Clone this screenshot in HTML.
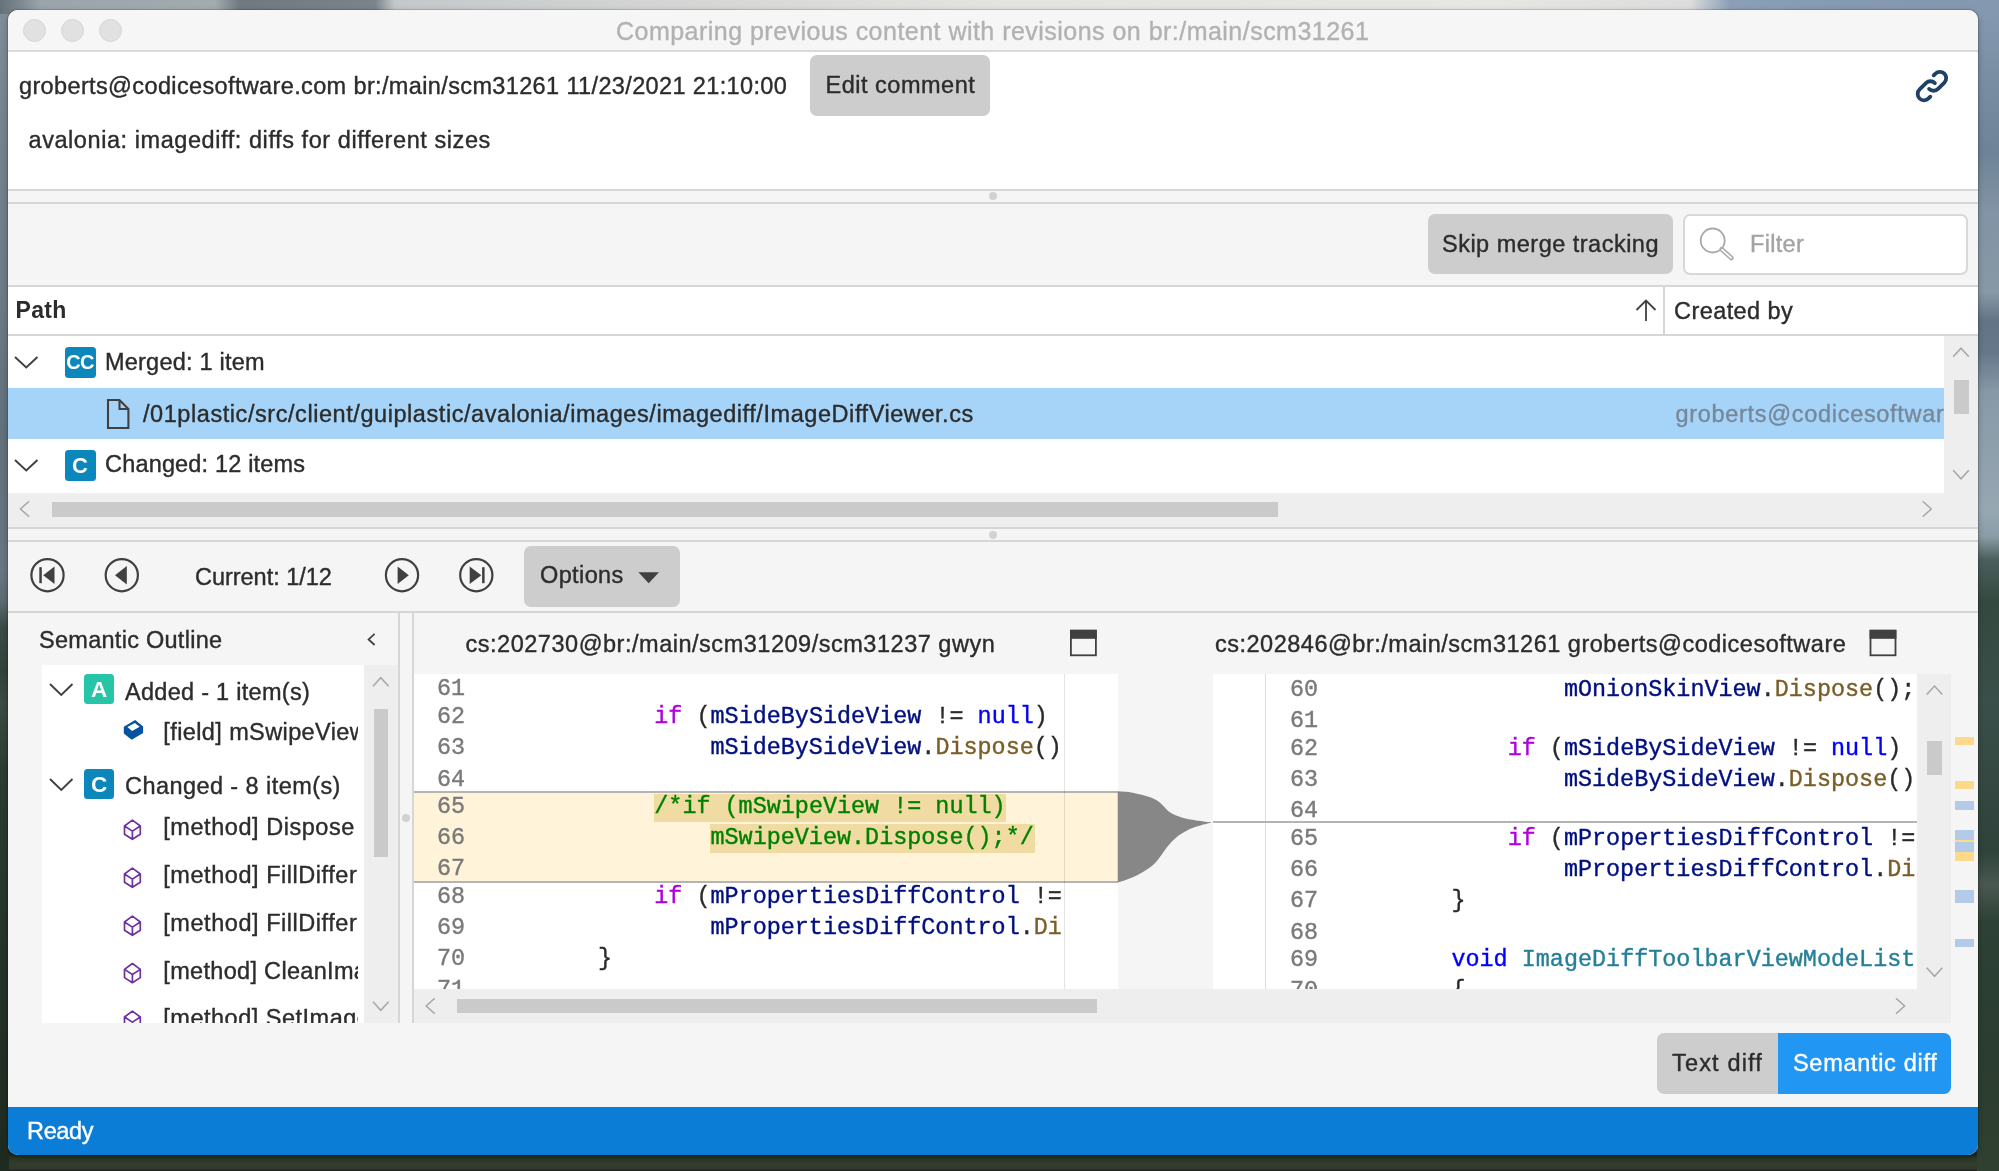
<!DOCTYPE html>
<html><head><meta charset="utf-8">
<title>Comparing previous content with revisions on br:/main/scm31261</title>
<style>
*{box-sizing:border-box;margin:0;padding:0}
html,body{width:1999px;height:1171px;overflow:hidden}
body{position:relative;font-family:"Liberation Sans",sans-serif;color:#323232;
 background:linear-gradient(to bottom,#8c99a3 0px,#7f8d98 250px,#6d7b85 520px,#4a5852 575px,#36443a 640px,#2f3b30 850px,#2a3426 1171px);}
.a{position:absolute}
.t{position:absolute;white-space:pre;line-height:1;-webkit-text-stroke-width:0.38px}
.m{font-family:"Liberation Mono",monospace}
svg{overflow:visible}
#top{position:absolute;left:0;top:0;width:1999px;height:14px;
 background:linear-gradient(to right,#66727a 0px,#7f8a92 22px,#9aa4ab 40px,#a3abb0 215px,#6f797f 240px,#7a848a 375px,#c4c8ca 395px,#d6d7d5 700px,#e3e3e0 1000px,#e6e6e3 1500px,#dcdddc 1690px,#8b9fb8 1730px,#8499b2 1850px,#8498b0 1999px)}
#bot{position:absolute;left:0;top:1150px;width:1999px;height:21px;background:linear-gradient(to bottom,#1f291f 0px,#1f291f 5px,#2b3726 8px,#333e2d 14px,#2f392a 19px,#1a1f18 21px)}
#bgL{position:absolute;left:0;top:12px;width:9px;height:1159px;
 background:linear-gradient(to bottom,#808d97 0px,#75848f 120px,#6b7a85 300px,#62717c 420px,#687781 560px,#5c6b70 590px,#3a4c45 615px,#32443b 660px,#3b4c44 690px,#2c3d33 760px,#26362b 900px,#1f2b21 1140px)}
#bgR{position:absolute;left:1977px;top:12px;width:22px;height:1159px;
 background:linear-gradient(to bottom,#8498b0 0px,#7b8fa4 60px,#6f8397 140px,#8294a5 200px,#8798a6 280px,#627484 310px,#65778a 340px,#8799a7 380px,#97a8b3 500px,#8a9ca5 525px,#4a5f5c 548px,#34493f 590px,#3a4f49 690px,#2f433b 840px,#4a5851 873px,#2d4136 910px,#2b3d30 1040px,#2f4030 1140px)}
#win{position:absolute;left:8px;top:10px;width:1970px;height:1145px;background:#f5f5f5;border-radius:10px;overflow:hidden;}
#sh{position:absolute;left:8px;top:10px;width:1970px;height:1145px;border-radius:10px;box-shadow:0 0 0 1px rgba(0,0,0,.12),0 2px 6px rgba(0,0,0,.28)}
#c{position:absolute;left:-8px;top:-10px;width:1999px;height:1171px;will-change:transform}
.k{color:#af00db}.v{color:#001080}.f{color:#795e26}.b{color:#0000ff}.ty{color:#267f99}.cm{color:#008000}.p{color:#1e1e1e}
.hi{background:#f0dca2}
</style></head><body>
<div id="bot"></div><div id="bgL"></div><div id="bgR"></div><div id="top"></div><div id="sh"></div>
<div id="win"><div id="c">
<div class="a" style="left:8px;top:10px;width:1970px;height:40px;background:#f6f6f6;"></div>
<div class="a" style="left:8px;top:50px;width:1970px;height:1.5px;background:#dadada;"></div>
<div class="a" style="left:22.799999999999997px;top:19px;width:23px;height:23px;background:#e1e1e1;border-radius:50%;border:1px solid #d6d6d6"></div>
<div class="a" style="left:60.8px;top:19px;width:23px;height:23px;background:#e1e1e1;border-radius:50%;border:1px solid #d6d6d6"></div>
<div class="a" style="left:98.8px;top:19px;width:23px;height:23px;background:#e1e1e1;border-radius:50%;border:1px solid #d6d6d6"></div>
<div class="t" id="t0" style="left:616.00px;top:18.94px;font-size:25px;color:#b2b2b2;letter-spacing:0.473px;">Comparing previous content with revisions on br:/main/scm31261</div>
<div class="a" style="left:8px;top:51.5px;width:1970px;height:137.5px;background:#ffffff;"></div>
<div class="t" id="t1" style="left:19.00px;top:75.41px;font-size:23.5px;color:#2c2c2c;letter-spacing:0.364px;">groberts@codicesoftware.com br:/main/scm31261 11/23/2021 21:10:00</div>
<div class="a" style="left:810px;top:55px;width:180px;height:61px;background:#cdcdcd;border-radius:7px"></div>
<div class="t" id="t2" style="left:825.50px;top:74.21px;font-size:23.5px;color:#2c2c2c;letter-spacing:0.512px;">Edit comment</div>
<div class="t" id="t3" style="left:28.50px;top:128.71px;font-size:23.5px;color:#2c2c2c;letter-spacing:0.566px;">avalonia: imagediff: diffs for different sizes</div>
<svg class="a" style="left:1912.8px;top:66.9px;" width="38" height="38" viewBox="0 0 24 24"><path d="M13.828 10.172a4 4 0 00-5.656 0l-4 4a4 4 0 105.656 5.656l1.102-1.101m-.758-4.899a4 4 0 005.656 0l4-4a4 4 0 00-5.656-5.656l-1.1 1.1" fill="none" stroke="#1f4166" stroke-width="2.4" stroke-linecap="round" stroke-linejoin="round"/></svg>
<div class="a" style="left:8px;top:188.6px;width:1970px;height:2px;background:#d6d6d6;"></div>
<div class="a" style="left:8px;top:202px;width:1970px;height:2px;background:#d6d6d6;"></div>
<div class="a" style="left:989.2px;top:192.2px;width:8px;height:8px;background:#d2d2d2;border-radius:50%"></div>
<div class="a" style="left:1427.5px;top:214px;width:245px;height:60px;background:#cdcdcd;border-radius:7px"></div>
<div class="t" id="t4" style="left:1442.00px;top:233.21px;font-size:23.5px;color:#2c2c2c;letter-spacing:0.490px;">Skip merge tracking</div>
<div class="a" style="left:1682.8px;top:213.7px;width:285.4px;height:61.1px;background:#ffffff;border-radius:7px;border:2px solid #d8d8d8"></div>
<svg class="a" style="left:1695.6px;top:224px;" width="40" height="40" viewBox="0 0 40 40"><circle cx="16.7" cy="16.5" r="12" fill="none" stroke="#a9a9a9" stroke-width="1.8"/><path d="M25.6 25.2 L35.4 34" stroke="#a9a9a9" stroke-width="4.6" stroke-linecap="round"/><path d="M26 25.6 L35.2 33.8" stroke="#ffffff" stroke-width="1.6" stroke-linecap="round"/></svg>
<div class="t" id="t5" style="left:1750.00px;top:233.21px;font-size:23.5px;color:#a3a3a3;letter-spacing:0.313px;">Filter</div>
<div class="a" style="left:8px;top:286px;width:1970px;height:50px;background:#ffffff;"></div>
<div class="a" style="left:8px;top:285px;width:1970px;height:2px;background:#d6d6d6;"></div>
<div class="a" style="left:8px;top:334px;width:1970px;height:2px;background:#d6d6d6;"></div>
<div class="t" id="t6" style="left:15.50px;top:298.63px;font-size:23px;color:#2c2c2c;font-weight:700;-webkit-text-stroke:0;letter-spacing:0.319px;">Path</div>
<div class="a" style="left:1663.1px;top:286px;width:2px;height:49px;background:#d6d6d6;"></div>
<svg class="a" style="left:1634px;top:298px;" width="24" height="26" viewBox="0 0 24 26"><path d="M12 2.5 V23 M2.5 12 L12 2.5 L21.5 12" fill="none" stroke="#404040" stroke-width="1.8" stroke-linejoin="miter"/></svg>
<div class="t" id="t7" style="left:1674.00px;top:299.61px;font-size:23.5px;color:#2c2c2c;letter-spacing:0.427px;">Created by</div>
<div class="a" style="left:8px;top:336px;width:1936px;height:157px;background:#ffffff;"></div>
<div class="a" style="left:8px;top:388px;width:1936px;height:51px;background:#a6d4f9;"></div>
<svg class="a" style="left:15.3px;top:356.8px;" width="22.5" height="10.5" viewBox="0 0 22.5 10.5"><path d="M0 0 L11.25 10.5 L22.5 0" fill="none" stroke="#404040" stroke-width="1.9"/></svg>
<div class="a" style="left:64.5px;top:346.6px;width:31px;height:31px;background:#0b87bc;border-radius:3.5px;color:#fff;font-weight:700;font-size:20px;line-height:31px;text-align:center;letter-spacing:-0.7px;padding-left:0px;padding-top:0.5px">CC</div>
<div class="t" id="t8" style="left:105.00px;top:350.51px;font-size:23.5px;color:#2c2c2c;letter-spacing:0.217px;">Merged: 1 item</div>
<svg class="a" style="left:106px;top:397.5px;" width="25" height="32" viewBox="0 0 25 32"><path d="M2 2 H13.5 L22.4 11 V30 H2 Z M13.5 2 V11 H22.4" fill="none" stroke="#404040" stroke-width="2.1" stroke-linejoin="miter"/></svg>
<div class="t" id="t9" style="left:143.00px;top:403.21px;font-size:23.5px;color:#2c2c2c;letter-spacing:0.561px;">/01plastic/src/client/guiplastic/avalonia/images/imagediff/ImageDiffViewer.cs</div>
<div class="a" style="left:1664px;top:388px;width:280px;height:51px;overflow:hidden;background:transparent"><div class="a" style="left:-1664px;top:-388px;width:1999px;height:1171px">
<div class="t" id="t10" style="left:1675.50px;top:403.21px;font-size:23.5px;color:#76889a;letter-spacing:0.693px;">groberts@codicesoftware.com</div>
</div></div>
<svg class="a" style="left:15.3px;top:460px;" width="22.5" height="10.5" viewBox="0 0 22.5 10.5"><path d="M0 0 L11.25 10.5 L22.5 0" fill="none" stroke="#404040" stroke-width="1.9"/></svg>
<div class="a" style="left:64.5px;top:449.6px;width:31px;height:31px;background:#0b87bc;border-radius:3.5px;color:#fff;font-weight:700;font-size:22px;line-height:31px;text-align:center;letter-spacing:0px;padding-left:0px;padding-top:0.5px">C</div>
<div class="t" id="t11" style="left:105.00px;top:453.21px;font-size:23.5px;color:#2c2c2c;letter-spacing:0.174px;">Changed: 12 items</div>
<div class="a" style="left:1944px;top:336px;width:34px;height:157px;background:#eeeeee;"></div>
<svg class="a" style="left:0;top:0" width="1999" height="1171"><path d="M1953.2 356.8 L1961 348.2 L1968.8 356.8" fill="none" stroke="#a6a6a6" stroke-width="1.5"/></svg>
<div class="a" style="left:1953.5px;top:380px;width:15px;height:33.5px;background:#cacaca;"></div>
<svg class="a" style="left:0;top:0" width="1999" height="1171"><path d="M1953.2 470.2 L1961 478.8 L1968.8 470.2" fill="none" stroke="#a6a6a6" stroke-width="1.5"/></svg>
<div class="a" style="left:8px;top:492.8px;width:1970px;height:34.7px;background:#eeeeee;"></div>
<svg class="a" style="left:0;top:0" width="1999" height="1171"><path d="M29.1 501.2 L20.5 509 L29.1 516.8" fill="none" stroke="#a6a6a6" stroke-width="1.5"/></svg>
<div class="a" style="left:51.5px;top:502.4px;width:1226px;height:14.4px;background:#cacaca;"></div>
<svg class="a" style="left:0;top:0" width="1999" height="1171"><path d="M1922.7 501.2 L1931.3 509 L1922.7 516.8" fill="none" stroke="#a6a6a6" stroke-width="1.5"/></svg>
<div class="a" style="left:8px;top:527px;width:1970px;height:2px;background:#d6d6d6;"></div>
<div class="a" style="left:8px;top:540px;width:1970px;height:2px;background:#d6d6d6;"></div>
<div class="a" style="left:989.2px;top:531px;width:8px;height:8px;background:#d2d2d2;border-radius:50%"></div>
<svg class="a" style="left:0;top:0" width="1999" height="1171"><circle cx="47.5" cy="575.2" r="16.1" fill="none" stroke="#404040" stroke-width="2.2"/><rect x="39.3" y="567.2" width="2.5" height="16" fill="#404040"/><path d="M43.2 575.2 L54.5 566.5 L54.5 583.9000000000001 Z" fill="#404040"/></svg>
<svg class="a" style="left:0;top:0" width="1999" height="1171"><circle cx="121.8" cy="575.2" r="16.1" fill="none" stroke="#404040" stroke-width="2.2"/><path d="M115.0 575.2 L126.8 566.0 L126.8 584.4000000000001 Z" fill="#404040"/></svg>
<div class="t" id="t12" style="left:195.00px;top:566.21px;font-size:23.5px;color:#2c2c2c;letter-spacing:-0.030px;">Current: 1/12</div>
<svg class="a" style="left:0;top:0" width="1999" height="1171"><circle cx="402" cy="575.2" r="16.1" fill="none" stroke="#404040" stroke-width="2.2"/><path d="M408.8 575.2 L397.6 566.4000000000001 L397.6 584.0 Z" fill="#404040"/></svg>
<svg class="a" style="left:0;top:0" width="1999" height="1171"><circle cx="476.3" cy="575.2" r="16.1" fill="none" stroke="#404040" stroke-width="2.2"/><rect x="482.1" y="567.2" width="2.5" height="16" fill="#404040"/><path d="M481.3 575.2 L469.7 566.4000000000001 L469.7 584.0 Z" fill="#404040"/></svg>
<div class="a" style="left:524.2px;top:546px;width:156px;height:61px;background:#cdcdcd;border-radius:7px"></div>
<div class="t" id="t13" style="left:540.00px;top:564.41px;font-size:23.5px;color:#2c2c2c;letter-spacing:0.383px;">Options</div>
<svg class="a" style="left:0;top:0" width="1999" height="1171"><path d="M638.4 572.3 H659 L648.7 583.2 Z" fill="#404040"/></svg>
<div class="a" style="left:8px;top:611px;width:1970px;height:2px;background:#d6d6d6;"></div>
<div class="t" id="t14" style="left:39.00px;top:629.01px;font-size:23.5px;color:#2c2c2c;letter-spacing:0.276px;">Semantic Outline</div>
<svg class="a" style="left:0;top:0" width="1999" height="1171"><path d="M374.6 633.8 L368.6 639.4 L374.6 645" fill="none" stroke="#404040" stroke-width="1.8"/></svg>
<div class="a" style="left:42px;top:665px;width:322px;height:358px;background:#ffffff;"></div>
<div class="a" style="left:364px;top:665px;width:33.5px;height:358px;background:#eeeeee;"></div>
<svg class="a" style="left:0;top:0" width="1999" height="1171"><path d="M373.0 686.3 L380.8 677.7 L388.6 686.3" fill="none" stroke="#a6a6a6" stroke-width="1.5"/></svg>
<div class="a" style="left:373.7px;top:708.5px;width:14.5px;height:148.5px;background:#cacaca;"></div>
<svg class="a" style="left:0;top:0" width="1999" height="1171"><path d="M373.0 1001.7 L380.8 1010.3 L388.6 1001.7" fill="none" stroke="#a6a6a6" stroke-width="1.5"/></svg>
<div class="a" style="left:398.3px;top:612px;width:1.6px;height:411px;background:#d6d6d6;"></div>
<div class="a" style="left:412px;top:612px;width:1.6px;height:411px;background:#d6d6d6;"></div>
<div class="a" style="left:402px;top:814px;width:8px;height:8px;background:#d2d2d2;border-radius:50%"></div>
<div class="a" style="left:42px;top:665px;width:315.5px;height:358px;overflow:hidden;background:transparent"><div class="a" style="left:-42px;top:-665px;width:1999px;height:1171px">
<svg class="a" style="left:49.8px;top:683.8px;" width="22.5" height="11" viewBox="0 0 22.5 11"><path d="M0 0 L11.25 11 L22.5 0" fill="none" stroke="#404040" stroke-width="1.9"/></svg>
<div class="a" style="left:84px;top:673.7px;width:30px;height:30px;background:#27c5a7;border-radius:3.5px;color:#fff;font-weight:700;font-size:22.5px;line-height:30px;text-align:center;letter-spacing:0px;padding-left:0px;padding-top:1px">A</div>
<div class="t" id="t15" style="left:125.00px;top:681.21px;font-size:23.5px;color:#2c2c2c;letter-spacing:0.285px;">Added - 1 item(s)</div>
<svg class="a" style="left:0;top:0" width="1999" height="1171"><path d="M135.2 720.1 L143.1 726.4 V732.9 L131.7 739.8 L123.8 733.6 V726.7 Z" fill="#0353a0"/><path d="M134.8 722.9 L139.7 726.7 L132.1 730.9 L127.4 727.1 Z" fill="#ffffff"/></svg>
<div class="t" id="t16" style="left:163.30px;top:721.01px;font-size:23.5px;color:#2c2c2c;letter-spacing:0.392px;">[field] mSwipeView</div>
<svg class="a" style="left:49.8px;top:779.2px;" width="22.5" height="11" viewBox="0 0 22.5 11"><path d="M0 0 L11.25 11 L22.5 0" fill="none" stroke="#404040" stroke-width="1.9"/></svg>
<div class="a" style="left:84px;top:769px;width:30px;height:30px;background:#0b87bc;border-radius:3.5px;color:#fff;font-weight:700;font-size:22.5px;line-height:30px;text-align:center;letter-spacing:0px;padding-left:0px;padding-top:1px">C</div>
<div class="t" id="t17" style="left:125.00px;top:775.21px;font-size:23.5px;color:#2c2c2c;letter-spacing:0.429px;">Changed - 8 item(s)</div>
<svg class="a" style="left:0;top:0" width="1999" height="1171"><path d="M132.4 820.1 L140.3 826.0 V834.2 L132.4 839.3000000000001 L124.5 834.2 V826.0 Z M124.5 826.0 L132.4 831.1 L140.3 826.0 M132.4 831.1 V839.3000000000001" fill="none" stroke="#7030a0" stroke-width="1.7" stroke-linejoin="round"/></svg>
<div class="t" id="t18" style="left:163.30px;top:816.21px;font-size:23.5px;color:#2c2c2c;letter-spacing:0.542px;">[method] Dispose</div>
<svg class="a" style="left:0;top:0" width="1999" height="1171"><path d="M132.4 868.1 L140.3 874.0 V882.2 L132.4 887.3000000000001 L124.5 882.2 V874.0 Z M124.5 874.0 L132.4 879.1 L140.3 874.0 M132.4 879.1 V887.3000000000001" fill="none" stroke="#7030a0" stroke-width="1.7" stroke-linejoin="round"/></svg>
<div class="t" id="t19" style="left:163.30px;top:864.21px;font-size:23.5px;color:#2c2c2c;letter-spacing:0.543px;">[method] FillDifferences</div>
<svg class="a" style="left:0;top:0" width="1999" height="1171"><path d="M132.4 916.1 L140.3 922.0 V930.2 L132.4 935.3000000000001 L124.5 930.2 V922.0 Z M124.5 922.0 L132.4 927.1 L140.3 922.0 M132.4 927.1 V935.3000000000001" fill="none" stroke="#7030a0" stroke-width="1.7" stroke-linejoin="round"/></svg>
<div class="t" id="t20" style="left:163.30px;top:912.21px;font-size:23.5px;color:#2c2c2c;letter-spacing:0.543px;">[method] FillDifferences</div>
<svg class="a" style="left:0;top:0" width="1999" height="1171"><path d="M132.4 963.5 L140.3 969.4 V977.6 L132.4 982.7 L124.5 977.6 V969.4 Z M124.5 969.4 L132.4 974.5 L140.3 969.4 M132.4 974.5 V982.7" fill="none" stroke="#7030a0" stroke-width="1.7" stroke-linejoin="round"/></svg>
<div class="t" id="t21" style="left:163.30px;top:959.61px;font-size:23.5px;color:#2c2c2c;letter-spacing:0.314px;">[method] CleanImages</div>
<svg class="a" style="left:0;top:0" width="1999" height="1171"><path d="M132.4 1011.1 L140.3 1017.0 V1025.2 L132.4 1030.3 L124.5 1025.2 V1017.0 Z M124.5 1017.0 L132.4 1022.1 L140.3 1017.0 M132.4 1022.1 V1030.3" fill="none" stroke="#7030a0" stroke-width="1.7" stroke-linejoin="round"/></svg>
<div class="t" id="t22" style="left:163.30px;top:1007.21px;font-size:23.5px;color:#2c2c2c;letter-spacing:0.500px;">[method] SetImages</div>
</div></div>
<div class="t" id="t23" style="left:465.50px;top:632.51px;font-size:23.5px;color:#2c2c2c;letter-spacing:0.520px;">cs:202730@br:/main/scm31209/scm31237 gwyn</div>
<svg class="a" style="left:0;top:0" width="1999" height="1171"><rect x="1070.9" y="630.6999999999999" width="25" height="24.6" fill="none" stroke="#404040" stroke-width="1.8"/><rect x="1070" y="629.8" width="26.8" height="9" fill="#404040"/></svg>
<div class="t" id="t24" style="left:1215.00px;top:632.51px;font-size:23.5px;color:#2c2c2c;letter-spacing:0.506px;">cs:202846@br:/main/scm31261 groberts@codicesoftware</div>
<svg class="a" style="left:0;top:0" width="1999" height="1171"><rect x="1870.5" y="630.6999999999999" width="25" height="24.6" fill="none" stroke="#404040" stroke-width="1.8"/><rect x="1869.6" y="629.8" width="26.8" height="9" fill="#404040"/></svg>
<div class="a" style="left:413.5px;top:673.5px;width:704.2px;height:315.5px;background:#ffffff;"></div>
<div class="a" style="left:413.5px;top:792px;width:704.2px;height:90px;background:#fff3da;"></div>
<div class="a" style="left:654px;top:793.5px;width:352px;height:28.5px;background:#f0dca2;"></div>
<div class="a" style="left:710.3px;top:823.5px;width:324.5px;height:29.5px;background:#f0dca2;"></div>
<div class="a" style="left:413.5px;top:791px;width:704.2px;height:2px;background:#b4b4b4;"></div>
<div class="a" style="left:413.5px;top:881px;width:704.2px;height:2px;background:#b4b4b4;"></div>
<div class="a" style="left:1064.2px;top:673.5px;width:1px;height:315.5px;background:rgba(0,0,0,0.11);"></div>
<div class="a" style="left:413.5px;top:673.5px;width:649.5px;height:315.5px;overflow:hidden;background:transparent"><div class="a" style="left:-413.5px;top:-673.5px;width:1999px;height:1171px">
<div class="t m" id="t25" style="left:436.90px;top:677.23px;font-size:23.43px;color:#7a7a7a;">61</div>
<div class="t m" id="t26" style="left:436.90px;top:705.23px;font-size:23.43px;color:#7a7a7a;">62</div>
<div class="t m" id="t27" style="left:485.60px;top:705.23px;font-size:23.43px;color:#2a2a2a;">            <span class="k">if</span> (<span class="v">mSideBySideView</span> != <span class="b">null</span>)</div>
<div class="t m" id="t28" style="left:436.90px;top:736.43px;font-size:23.43px;color:#7a7a7a;">63</div>
<div class="t m" id="t29" style="left:485.60px;top:736.43px;font-size:23.43px;color:#2a2a2a;">                <span class="v">mSideBySideView</span>.<span class="f">Dispose</span>();</div>
<div class="t m" id="t30" style="left:436.90px;top:767.63px;font-size:23.43px;color:#7a7a7a;">64</div>
<div class="t m" id="t31" style="left:436.90px;top:794.83px;font-size:23.43px;color:#7a7a7a;">65</div>
<div class="t m" id="t32" style="left:485.60px;top:794.83px;font-size:23.43px;color:#2a2a2a;">            <span class="cm">/*if (mSwipeView != null)</span></div>
<div class="t m" id="t33" style="left:436.90px;top:826.03px;font-size:23.43px;color:#7a7a7a;">66</div>
<div class="t m" id="t34" style="left:485.60px;top:826.03px;font-size:23.43px;color:#2a2a2a;">                <span class="cm">mSwipeView.Dispose();*/</span></div>
<div class="t m" id="t35" style="left:436.90px;top:857.23px;font-size:23.43px;color:#7a7a7a;">67</div>
<div class="t m" id="t36" style="left:436.90px;top:884.83px;font-size:23.43px;color:#7a7a7a;">68</div>
<div class="t m" id="t37" style="left:485.60px;top:884.83px;font-size:23.43px;color:#2a2a2a;">            <span class="k">if</span> (<span class="v">mPropertiesDiffControl</span> != <span class="b">null</span>)</div>
<div class="t m" id="t38" style="left:436.90px;top:916.03px;font-size:23.43px;color:#7a7a7a;">69</div>
<div class="t m" id="t39" style="left:485.60px;top:916.03px;font-size:23.43px;color:#2a2a2a;">                <span class="v">mPropertiesDiffControl</span>.<span class="f">Dispose</span>();</div>
<div class="t m" id="t40" style="left:436.90px;top:947.23px;font-size:23.43px;color:#7a7a7a;">70</div>
<div class="t m" id="t41" style="left:485.60px;top:947.23px;font-size:23.43px;color:#2a2a2a;">        }</div>
<div class="t m" id="t42" style="left:436.90px;top:978.43px;font-size:23.43px;color:#7a7a7a;">71</div>
</div></div>
<svg class="a" style="left:0;top:0" width="1999" height="1171"><path d="M1117.7 791.2C1119.8 791.4 1125.5 791.5 1130.1 792.3C1134.7 793.1 1141.1 794.7 1145.1 795.8C1149.1 796.9 1151.6 797.8 1154.1 798.9C1156.6 800.0 1158.3 801.3 1160.1 802.7C1161.8 804.1 1163.1 805.7 1164.6 807.2C1166.1 808.7 1167.3 810.4 1169.1 811.7C1170.8 813.0 1172.8 814.1 1175.1 815.1C1177.3 816.1 1179.1 816.8 1182.6 817.7C1186.1 818.6 1191.2 819.6 1196.1 820.4C1201.0 821.2 1209.3 822.0 1212.0 822.3L1212.0 822.3C1208.8 823.2 1198.0 825.9 1193.1 827.7C1188.2 829.5 1185.6 831.2 1182.6 833.0C1179.6 834.8 1177.6 836.2 1175.1 838.5C1172.6 840.8 1169.8 843.8 1167.6 846.5C1165.3 849.2 1163.6 852.1 1161.6 854.8C1159.6 857.4 1157.8 860.1 1155.6 862.4C1153.3 864.7 1151.1 866.7 1148.1 868.8C1145.1 870.9 1141.1 873.2 1137.6 875.0C1134.1 876.8 1130.3 878.3 1127.0 879.6C1123.7 880.9 1119.2 882.1 1117.7 882.6 Z" fill="#878787"/></svg>
<div class="a" style="left:1213px;top:673.5px;width:704px;height:315.5px;background:#ffffff;"></div>
<div class="a" style="left:1265px;top:673.5px;width:1.2px;height:315.5px;background:#dedede;"></div>
<div class="a" style="left:1213px;top:821.3px;width:704px;height:2px;background:#b4b4b4;"></div>
<div class="a" style="left:1213px;top:673.5px;width:702px;height:315.5px;overflow:hidden;background:transparent"><div class="a" style="left:-1213px;top:-673.5px;width:1999px;height:1171px">
<div class="t m" id="t43" style="left:1289.90px;top:677.83px;font-size:23.43px;color:#7a7a7a;">60</div>
<div class="t m" id="t44" style="left:1339.00px;top:677.83px;font-size:23.43px;color:#2a2a2a;">                <span class="v">mOnionSkinView</span>.<span class="f">Dispose</span>();</div>
<div class="t m" id="t45" style="left:1289.90px;top:709.33px;font-size:23.43px;color:#7a7a7a;">61</div>
<div class="t m" id="t46" style="left:1289.90px;top:736.83px;font-size:23.43px;color:#7a7a7a;">62</div>
<div class="t m" id="t47" style="left:1339.00px;top:736.83px;font-size:23.43px;color:#2a2a2a;">            <span class="k">if</span> (<span class="v">mSideBySideView</span> != <span class="b">null</span>)</div>
<div class="t m" id="t48" style="left:1289.90px;top:768.23px;font-size:23.43px;color:#7a7a7a;">63</div>
<div class="t m" id="t49" style="left:1339.00px;top:768.23px;font-size:23.43px;color:#2a2a2a;">                <span class="v">mSideBySideView</span>.<span class="f">Dispose</span>();</div>
<div class="t m" id="t50" style="left:1289.90px;top:799.33px;font-size:23.43px;color:#7a7a7a;">64</div>
<div class="t m" id="t51" style="left:1289.90px;top:826.73px;font-size:23.43px;color:#7a7a7a;">65</div>
<div class="t m" id="t52" style="left:1339.00px;top:826.73px;font-size:23.43px;color:#2a2a2a;">            <span class="k">if</span> (<span class="v">mPropertiesDiffControl</span> != <span class="b">null</span>)</div>
<div class="t m" id="t53" style="left:1289.90px;top:857.73px;font-size:23.43px;color:#7a7a7a;">66</div>
<div class="t m" id="t54" style="left:1339.00px;top:857.73px;font-size:23.43px;color:#2a2a2a;">                <span class="v">mPropertiesDiffControl</span>.<span class="f">Dispose</span>();</div>
<div class="t m" id="t55" style="left:1289.90px;top:889.23px;font-size:23.43px;color:#7a7a7a;">67</div>
<div class="t m" id="t56" style="left:1339.00px;top:889.23px;font-size:23.43px;color:#2a2a2a;">        }</div>
<div class="t m" id="t57" style="left:1289.90px;top:920.73px;font-size:23.43px;color:#7a7a7a;">68</div>
<div class="t m" id="t58" style="left:1289.90px;top:947.73px;font-size:23.43px;color:#7a7a7a;">69</div>
<div class="t m" id="t59" style="left:1339.00px;top:947.73px;font-size:23.43px;color:#2a2a2a;">        <span class="b">void</span> <span class="ty">ImageDiffToolbarViewModeList</span></div>
<div class="t m" id="t60" style="left:1289.90px;top:978.53px;font-size:23.43px;color:#7a7a7a;">70</div>
<div class="t m" id="t61" style="left:1339.00px;top:978.53px;font-size:23.43px;color:#2a2a2a;">        {</div>
</div></div>
<div class="a" style="left:1917px;top:673.5px;width:33.7px;height:315.5px;background:#eeeeee;"></div>
<svg class="a" style="left:0;top:0" width="1999" height="1171"><path d="M1926.7 694.5999999999999 L1934.5 686.0 L1942.3 694.5999999999999" fill="none" stroke="#a6a6a6" stroke-width="1.5"/></svg>
<div class="a" style="left:1926.5px;top:741px;width:15px;height:33.7px;background:#cacaca;"></div>
<svg class="a" style="left:0;top:0" width="1999" height="1171"><path d="M1926.7 967.7 L1934.5 976.3 L1942.3 967.7" fill="none" stroke="#a6a6a6" stroke-width="1.5"/></svg>
<div class="a" style="left:413.5px;top:989px;width:1537.2px;height:34px;background:#eeeeee;"></div>
<svg class="a" style="left:0;top:0" width="1999" height="1171"><path d="M434.8 998.2 L426.2 1006 L434.8 1013.8" fill="none" stroke="#a6a6a6" stroke-width="1.5"/></svg>
<div class="a" style="left:457px;top:999px;width:640px;height:14px;background:#cacaca;"></div>
<svg class="a" style="left:0;top:0" width="1999" height="1171"><path d="M1896.0 998.2 L1904.6 1006 L1896.0 1013.8" fill="none" stroke="#a6a6a6" stroke-width="1.5"/></svg>
<div class="a" style="left:1955px;top:737.3px;width:19.3px;height:7.7px;background:#fcd98b;"></div>
<div class="a" style="left:1955px;top:780.9px;width:19.3px;height:8.3px;background:#fcd98b;"></div>
<div class="a" style="left:1955px;top:801.2px;width:19.3px;height:9.1px;background:#b3cbe8;"></div>
<div class="a" style="left:1955px;top:829.9px;width:19.3px;height:10.1px;background:#b3cbe8;"></div>
<div class="a" style="left:1955px;top:840px;width:19.3px;height:2.2px;background:#fcd98b;"></div>
<div class="a" style="left:1955px;top:842.2px;width:19.3px;height:9.5px;background:#b3cbe8;"></div>
<div class="a" style="left:1955px;top:851.7px;width:19.3px;height:9.0px;background:#fcd98b;"></div>
<div class="a" style="left:1955px;top:890px;width:19.3px;height:12.8px;background:#b3cbe8;"></div>
<div class="a" style="left:1955px;top:938.8px;width:19.3px;height:8.7px;background:#b3cbe8;"></div>
<div class="a" style="left:1657px;top:1033px;width:121px;height:60.5px;background:#cdcdcd;border-radius:7px 0 0 7px"></div>
<div class="a" style="left:1778px;top:1033px;width:173px;height:60.5px;background:#2196f3;border-radius:0 7px 7px 0"></div>
<div class="t" id="t62" style="left:1672.00px;top:1052.21px;font-size:23.5px;color:#2c2c2c;letter-spacing:1.155px;">Text diff</div>
<div class="t" id="t63" style="left:1793.00px;top:1052.21px;font-size:23.5px;color:#ffffff;letter-spacing:0.698px;">Semantic diff</div>
<div class="a" style="left:8px;top:1107px;width:1970px;height:48px;background:#0c7dd6;"></div>
<div class="t" id="t64" style="left:27.00px;top:1119.71px;font-size:23.5px;color:#ffffff;letter-spacing:-0.334px;">Ready</div>
</div></div></body></html>
